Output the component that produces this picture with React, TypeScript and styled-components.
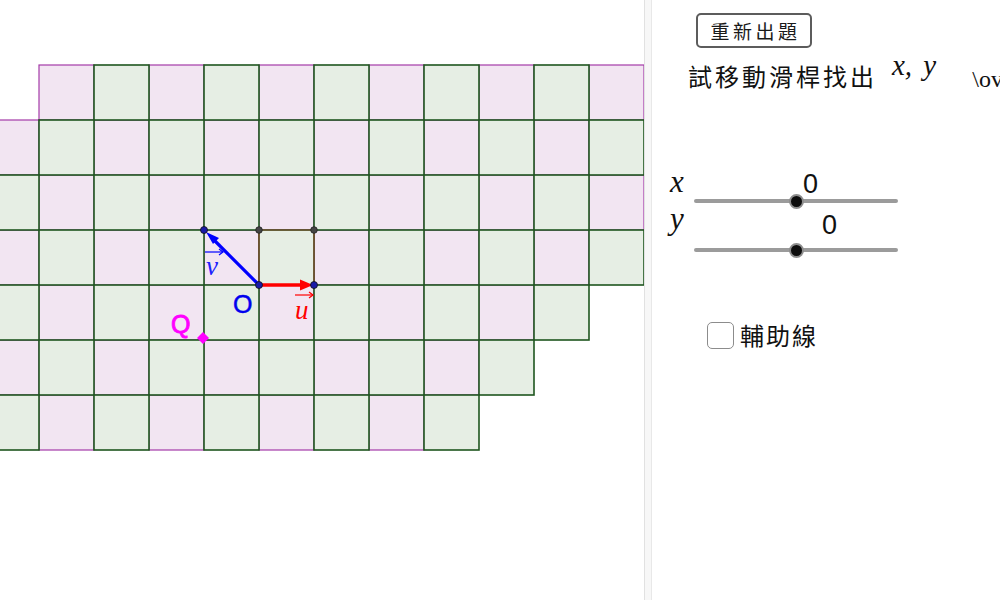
import React from 'react';
import styled, { createGlobalStyle } from 'styled-components';

const GlobalStyle = createGlobalStyle`
  html, body {
    margin: 0;
    padding: 0;
    background: #fff;
    overflow: hidden;
  }
  body {
    font-family: "Noto Sans CJK TC", "Noto Sans", sans-serif;
    color: #111;
  }
`;

const Applet = styled.div`
  display: flex;
  width: 1000px;
  height: 600px;
  overflow: hidden;
  background: #fff;
`;

const GraphicsView = styled.div`
  width: 644px;
  height: 600px;
  flex: none;
  overflow: hidden;
`;

const Divider = styled.div`
  width: 6px;
  flex: none;
  background: #f7f7f7;
  border-left: 1px solid #e1e1e1;
  border-right: 1px solid #e8e8e8;
`;

const ControlPanel = styled.div`
  flex: 1;
  min-width: 0;
  display: flex;
  flex-direction: column;
  align-items: flex-start;
  padding: 13px 0 0 18px;
  overflow: hidden;
`;

const ReloadButton = styled.button`
  margin-left: 26px;
  width: 116px;
  height: 35px;
  box-sizing: border-box;
  padding: 0 0 0 3px;
  border: 2px solid #5c5c5c;
  border-radius: 5px;
  background: #fff;
  color: #1a1a1a;
  font-family: "Noto Sans CJK TC", sans-serif;
  font-size: 19px;
  letter-spacing: 3.5px;
  line-height: 1;
  cursor: pointer;
`;

const Prompt = styled.div`
  margin: 13px 0 0 18px;
  display: flex;
  align-items: flex-start;
  white-space: nowrap;
  height: 30px;
`;

const PromptText = styled.span`
  font-size: 24px;
  line-height: 30px;
  letter-spacing: 3px;
`;

const MathText = styled.span<{ $italic?: boolean; $gap: number; $shift: number; $size: number }>`
  margin-left: ${p => p.$gap}px;
  margin-top: ${p => p.$shift}px;
  font-family: "Liberation Serif", "DejaVu Serif", serif;
  font-style: ${p => (p.$italic ? 'italic' : 'normal')};
  font-size: ${p => p.$size}px;
  line-height: 30px;
  word-spacing: 4px;
`;

const Sliders = styled.div`
  margin-top: 82px;
  display: flex;
  flex-direction: column;
  gap: 11px;
`;

const SliderRow = styled.div`
  display: flex;
  align-items: flex-start;
`;

const VarLabel = styled.span<{ $top: number }>`
  width: 24px;
  margin-top: ${p => p.$top}px;
  font-family: "Liberation Serif", "DejaVu Serif", serif;
  font-style: italic;
  font-size: 31px;
  line-height: 32px;
  color: #111;
`;

const SliderBody = styled.div`
  display: flex;
  flex-direction: column;
`;

const SliderValue = styled.span<{ $left: number }>`
  margin-left: ${p => p.$left}px;
  font-family: "Liberation Sans", Arial, sans-serif;
  font-size: 27px;
  line-height: 22px;
  color: #111;
`;

const Track = styled.div<{ $gap: number }>`
  margin-top: ${p => p.$gap}px;
  width: 204px;
  height: 4px;
  border-radius: 2px;
  background: #9b9b9b;
  display: flex;
  align-items: center;
  justify-content: center;
`;

const Knob = styled.div`
  flex: none;
  width: 15px;
  height: 15px;
  box-sizing: border-box;
  border-radius: 50%;
  background: #0d0d0d;
  border: 2.5px solid #8e8e8e;
`;

const CheckRow = styled.label`
  margin: 69px 0 0 37px;
  display: flex;
  align-items: center;
  gap: 6px;
`;

const CheckBox = styled.span`
  width: 27px;
  height: 27px;
  box-sizing: border-box;
  border: 1.5px solid #8c8c8c;
  border-radius: 5px;
  background: #fff;
`;

const CheckText = styled.span`
  font-size: 24px;
  line-height: 28px;
  letter-spacing: 2px;
`;

const CELL = 55;
const X0 = 39;
const Y0 = 65;
const PINK = '#f2e5f2';
const GREEN = '#e6eee4';

// [row, first col, last col]
const rows: [number, number, number][] = [
  [0, 0, 10],
  [1, -1, 10],
  [2, -1, 10],
  [3, -1, 10],
  [4, -1, 9],
  [5, -1, 8],
  [6, -1, 7],
];

function Board() {
  const pink: React.ReactNode[] = [];
  const green: React.ReactNode[] = [];
  rows.forEach(([r, a, b]) => {
    for (let c = a; c <= b; c++) {
      const isPink = (((c + r) % 2) + 2) % 2 === 0;
      const rect = (
        <rect
          key={`${r}-${c}`}
          x={X0 + c * CELL}
          y={Y0 + r * CELL}
          width={CELL}
          height={CELL}
          fill={isPink ? PINK : GREEN}
          stroke={isPink ? '#a43aa8' : '#1f561f'}
          strokeWidth={isPink ? 1.2 : 1.6}
        />
      );
      (isPink ? pink : green).push(rect);
    }
  });
  return (
    <g>
      {pink}
      {green}
    </g>
  );
}

function Scene() {
  const O = { x: 259, y: 285 };
  return (
    <svg width="644" height="600" viewBox="0 0 644 600">
      <Board />
      {/* unit square */}
      <g stroke="#8a4a2c" strokeWidth="1.2" fill="none">
        <line x1={259} y1={230} x2={314} y2={230} />
        <line x1={314} y1={230} x2={314} y2={285} />
        <line x1={259} y1={230} x2={259} y2={285} />
      </g>
      {/* vector u */}
      <line x1={O.x} y1={O.y} x2={302} y2={285} stroke="#ff0000" strokeWidth="3.5" />
      <polygon points="313,285 300,279.5 300,290.5" fill="#ff0000" />
      {/* vector v */}
      <line x1={O.x} y1={O.y} x2={215} y2={241} stroke="#0000ff" strokeWidth="3.2" />
      <polygon points="206,232 219,238 213,244" fill="#0000ff" />
      {/* points */}
      <circle cx={259} cy={230} r={3.3} fill="#444" stroke="#222" strokeWidth="0.8" />
      <circle cx={314} cy={230} r={3.3} fill="#444" stroke="#222" strokeWidth="0.8" />
      <circle cx={204} cy={230} r={3.5} fill="#1a1aa8" stroke="#111" strokeWidth="0.8" />
      <circle cx={314} cy={285} r={3.5} fill="#1a1aa8" stroke="#111" strokeWidth="0.8" />
      <circle cx={259} cy={285} r={3.5} fill="#1a1aa8" stroke="#111" strokeWidth="0.8" />
      {/* Q */}
      <polygon points="203,332 209,338 203,344 197,338" fill="#ff00ff" />
      <text
        x={171}
        y={333}
        fontFamily="Liberation Sans, Arial, sans-serif"
        fontSize="25"
        fill="#ff00ff"
        stroke="#ff00ff"
        strokeWidth="0.9"
      >
        Q
      </text>
      {/* O */}
      <text
        x={233}
        y={313}
        fontFamily="Liberation Sans, Arial, sans-serif"
        fontSize="25"
        fill="#0000ee"
        stroke="#0000ee"
        strokeWidth="0.5"
      >
        O
      </text>
      {/* label u */}
      <g stroke="#ff0000" strokeWidth="1.2" fill="none">
        <line x1={295} y1={295} x2={313} y2={295} />
        <polyline points="309,292 313,295 309,298" />
      </g>
      <text x={295} y={319} fontFamily="Liberation Serif, DejaVu Serif, serif" fontStyle="italic" fontSize="27" fill="#ff0000">
        u
      </text>
      {/* label v */}
      <g stroke="#0000ff" strokeWidth="1.2" fill="none">
        <line x1={205} y1={252} x2={223} y2={252} />
        <polyline points="219,249 223,252 219,255" />
      </g>
      <text x={206} y={275} fontFamily="Liberation Serif, DejaVu Serif, serif" fontStyle="italic" fontSize="27" fill="#2020ff">
        v
      </text>
    </svg>
  );
}

interface SliderProps {
  name: string;
  value: number;
  valueLeft: number;
  trackGap: number;
  labelTop: number;
}

function Slider({ name, value, valueLeft, trackGap, labelTop }: SliderProps) {
  return (
    <SliderRow>
      <VarLabel $top={labelTop}>{name}</VarLabel>
      <SliderBody>
        <SliderValue $left={valueLeft}>{value}</SliderValue>
        <Track $gap={trackGap}>
          <Knob />
        </Track>
      </SliderBody>
    </SliderRow>
  );
}

export default function App() {
  return (
    <>
      <GlobalStyle />
      <Applet>
        <GraphicsView>
          <Scene />
        </GraphicsView>
        <Divider />
        <ControlPanel>
          <ReloadButton>重新出題</ReloadButton>
          <Prompt>
            <PromptText>試移動滑桿找出</PromptText>
            <MathText $italic $gap={15} $shift={-11} $size={29}>x, y</MathText>
            <MathText $gap={36} $shift={3} $size={24}>\overrightarrow</MathText>
          </Prompt>
          <Sliders>
            <Slider name="x" value={0} valueLeft={109} trackGap={4} labelTop={-7} />
            <Slider name="y" value={0} valueLeft={128} trackGap={12} labelTop={-11} />
          </Sliders>
          <CheckRow>
            <CheckBox />
            <CheckText>輔助線</CheckText>
          </CheckRow>
        </ControlPanel>
      </Applet>
    </>
  );
}
